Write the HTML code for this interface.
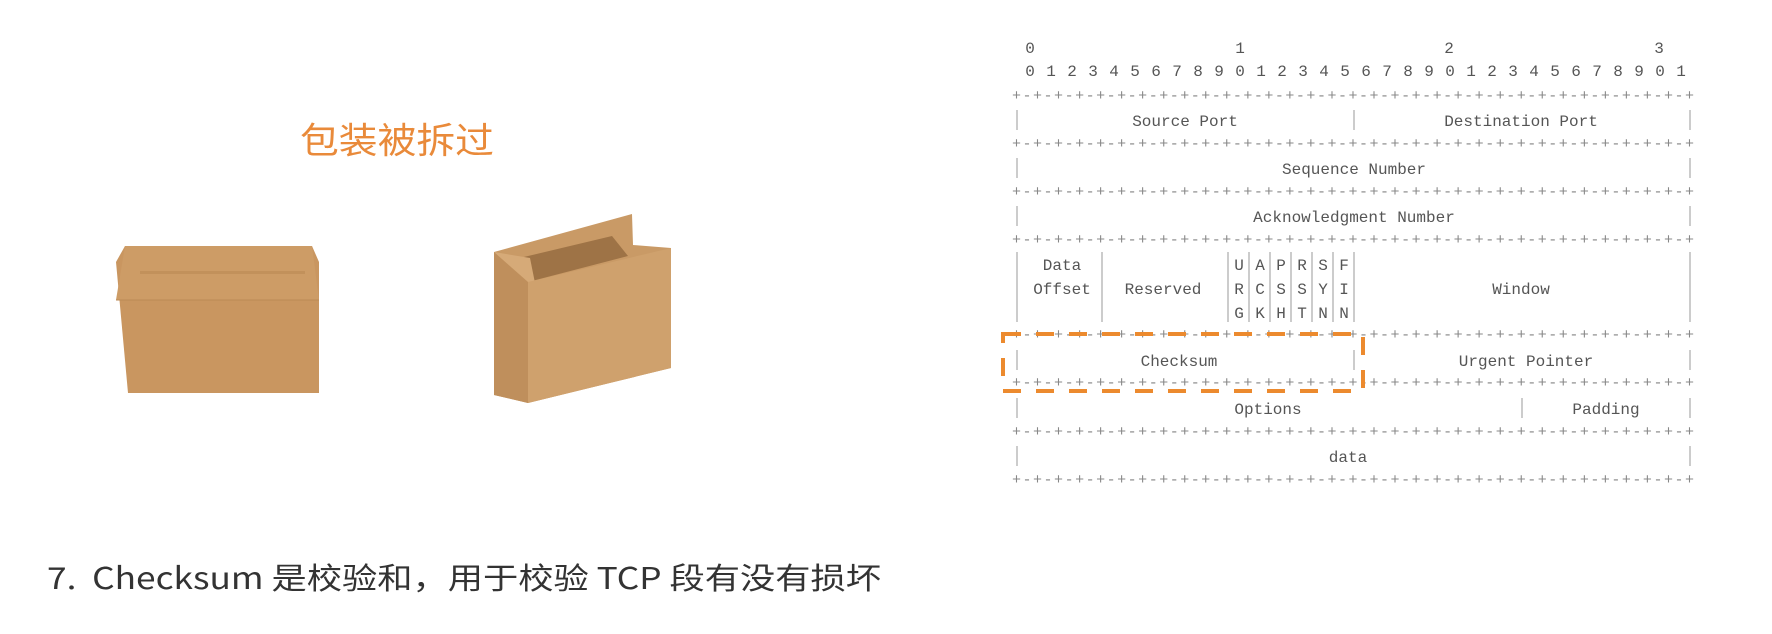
<!DOCTYPE html>
<html><head><meta charset="utf-8"><style>
html,body{margin:0;padding:0;background:#fff;width:1772px;height:634px;overflow:hidden}
svg{display:block}
.m{font-family:"Liberation Mono",monospace;font-size:16px;fill:#555}
.p{font-family:"Liberation Mono",monospace;font-size:15px;fill:#888}
</style></head><body>
<svg width="1772" height="634" viewBox="0 0 1772 634" xmlns="http://www.w3.org/2000/svg">
<text x="300" y="153" textLength="194" lengthAdjust="spacingAndGlyphs" font-family="'Noto Sans CJK SC',sans-serif" font-size="36" fill="#e98a3a">包装被拆过</text>
<!-- closed box -->
<polygon points="125,246 312,246 319,262 319,393 128,393 116,262" fill="#c99660"/>
<polygon points="125,246 312,246 319,300 116,300" fill="#cd9c66"/>
<rect x="140" y="271" width="165" height="3" fill="#b78650" opacity="0.5"/>
<line x1="116" y1="300" x2="319" y2="300" stroke="#bb8a55" stroke-width="1"/>
<!-- open box -->
<polygon points="494,252 632,214 633,245 671,248 671,368 528,403 494,395" fill="#c99a66"/>
<polygon points="503,262 612,236 628,256 528,282" fill="#9e7346"/>
<polygon points="494,252 530,258 535,283 515,295 500,280" fill="#d6aa78"/>
<polygon points="528,282 671,248 671,368 528,403" fill="#cfa16d"/>
<polygon points="494,252 528,282 528,403 494,395" fill="#bf8f5c"/>
<text x="47" y="589" textLength="834" lengthAdjust="spacingAndGlyphs" font-family="'Noto Sans CJK SC',sans-serif" font-size="30" fill="#333">7.&#160;&#160;Checksum 是校验和，用于校验 TCP 段有没有损坏</text>
<!-- header digits -->
<g class="m" text-anchor="middle">
<text x="1030" y="53">0</text><text x="1240" y="53">1</text><text x="1449" y="53">2</text><text x="1659" y="53">3</text>
<text y="76"><tspan x="1030">0</tspan><tspan x="1051">1</tspan><tspan x="1072">2</tspan><tspan x="1093">3</tspan><tspan x="1114">4</tspan><tspan x="1135">5</tspan><tspan x="1156">6</tspan><tspan x="1177">7</tspan><tspan x="1198">8</tspan><tspan x="1219">9</tspan><tspan x="1240">0</tspan><tspan x="1261">1</tspan><tspan x="1282">2</tspan><tspan x="1303">3</tspan><tspan x="1324">4</tspan><tspan x="1345">5</tspan><tspan x="1366">6</tspan><tspan x="1387">7</tspan><tspan x="1408">8</tspan><tspan x="1429">9</tspan><tspan x="1450">0</tspan><tspan x="1471">1</tspan><tspan x="1492">2</tspan><tspan x="1513">3</tspan><tspan x="1534">4</tspan><tspan x="1555">5</tspan><tspan x="1576">6</tspan><tspan x="1597">7</tspan><tspan x="1618">8</tspan><tspan x="1639">9</tspan><tspan x="1660">0</tspan><tspan x="1681">1</tspan></text>
</g>
<g class="p">
<text x="1012" y="100" textLength="682" lengthAdjust="spacing">+-+-+-+-+-+-+-+-+-+-+-+-+-+-+-+-+-+-+-+-+-+-+-+-+-+-+-+-+-+-+-+-+</text>
<text x="1012" y="148" textLength="682" lengthAdjust="spacing">+-+-+-+-+-+-+-+-+-+-+-+-+-+-+-+-+-+-+-+-+-+-+-+-+-+-+-+-+-+-+-+-+</text>
<text x="1012" y="196" textLength="682" lengthAdjust="spacing">+-+-+-+-+-+-+-+-+-+-+-+-+-+-+-+-+-+-+-+-+-+-+-+-+-+-+-+-+-+-+-+-+</text>
<text x="1012" y="244" textLength="682" lengthAdjust="spacing">+-+-+-+-+-+-+-+-+-+-+-+-+-+-+-+-+-+-+-+-+-+-+-+-+-+-+-+-+-+-+-+-+</text>
<text x="1012" y="339" textLength="682" lengthAdjust="spacing">+-+-+-+-+-+-+-+-+-+-+-+-+-+-+-+-+-+-+-+-+-+-+-+-+-+-+-+-+-+-+-+-+</text>
<text x="1012" y="387" textLength="682" lengthAdjust="spacing">+-+-+-+-+-+-+-+-+-+-+-+-+-+-+-+-+-+-+-+-+-+-+-+-+-+-+-+-+-+-+-+-+</text>
<text x="1012" y="436" textLength="682" lengthAdjust="spacing">+-+-+-+-+-+-+-+-+-+-+-+-+-+-+-+-+-+-+-+-+-+-+-+-+-+-+-+-+-+-+-+-+</text>
<text x="1012" y="484" textLength="682" lengthAdjust="spacing">+-+-+-+-+-+-+-+-+-+-+-+-+-+-+-+-+-+-+-+-+-+-+-+-+-+-+-+-+-+-+-+-+</text>
</g>
<g stroke="#bbb" stroke-width="1.5">
<line x1="1017" y1="110" x2="1017" y2="130"/><line x1="1354" y1="110" x2="1354" y2="130"/><line x1="1690" y1="110" x2="1690" y2="130"/>
<line x1="1017" y1="158" x2="1017" y2="178"/><line x1="1690" y1="158" x2="1690" y2="178"/>
<line x1="1017" y1="206" x2="1017" y2="226"/><line x1="1690" y1="206" x2="1690" y2="226"/>
<line x1="1017" y1="252" x2="1017" y2="322"/><line x1="1102" y1="252" x2="1102" y2="322"/><line x1="1228" y1="252" x2="1228" y2="322"/>
<line x1="1249" y1="252" x2="1249" y2="322"/><line x1="1270" y1="252" x2="1270" y2="322"/><line x1="1291" y1="252" x2="1291" y2="322"/><line x1="1312" y1="252" x2="1312" y2="322"/><line x1="1333" y1="252" x2="1333" y2="322"/><line x1="1354" y1="252" x2="1354" y2="322"/><line x1="1690" y1="252" x2="1690" y2="322"/>
<line x1="1017" y1="350" x2="1017" y2="370"/><line x1="1354" y1="350" x2="1354" y2="370"/><line x1="1690" y1="350" x2="1690" y2="370"/>
<line x1="1017" y1="398" x2="1017" y2="418"/><line x1="1522" y1="398" x2="1522" y2="418"/><line x1="1690" y1="398" x2="1690" y2="418"/>
<line x1="1017" y1="446" x2="1017" y2="466"/><line x1="1690" y1="446" x2="1690" y2="466"/>
</g>
<g class="m" text-anchor="middle">
<text x="1185" y="126">Source Port</text>
<text x="1521" y="126">Destination Port</text>
<text x="1354" y="174">Sequence Number</text>
<text x="1354" y="222">Acknowledgment Number</text>
<text x="1062" y="270">Data</text>
<text x="1062" y="294">Offset</text>
<text x="1163" y="294">Reserved</text>
<text x="1521" y="294">Window</text>
<text y="270"><tspan x="1239">U</tspan><tspan x="1260">A</tspan><tspan x="1281">P</tspan><tspan x="1302">R</tspan><tspan x="1323">S</tspan><tspan x="1344">F</tspan></text>
<text y="294"><tspan x="1239">R</tspan><tspan x="1260">C</tspan><tspan x="1281">S</tspan><tspan x="1302">S</tspan><tspan x="1323">Y</tspan><tspan x="1344">I</tspan></text>
<text y="318"><tspan x="1239">G</tspan><tspan x="1260">K</tspan><tspan x="1281">H</tspan><tspan x="1302">T</tspan><tspan x="1323">N</tspan><tspan x="1344">N</tspan></text>
<text x="1179" y="366">Checksum</text>
<text x="1526" y="366">Urgent Pointer</text>
<text x="1268" y="414">Options</text>
<text x="1606" y="414">Padding</text>
<text x="1348" y="462">data</text>
</g>
<rect x="1003" y="334" width="360" height="57" fill="none" stroke="#ec8a2e" stroke-width="4" stroke-dasharray="18 15"/>
</svg>
</body></html>
